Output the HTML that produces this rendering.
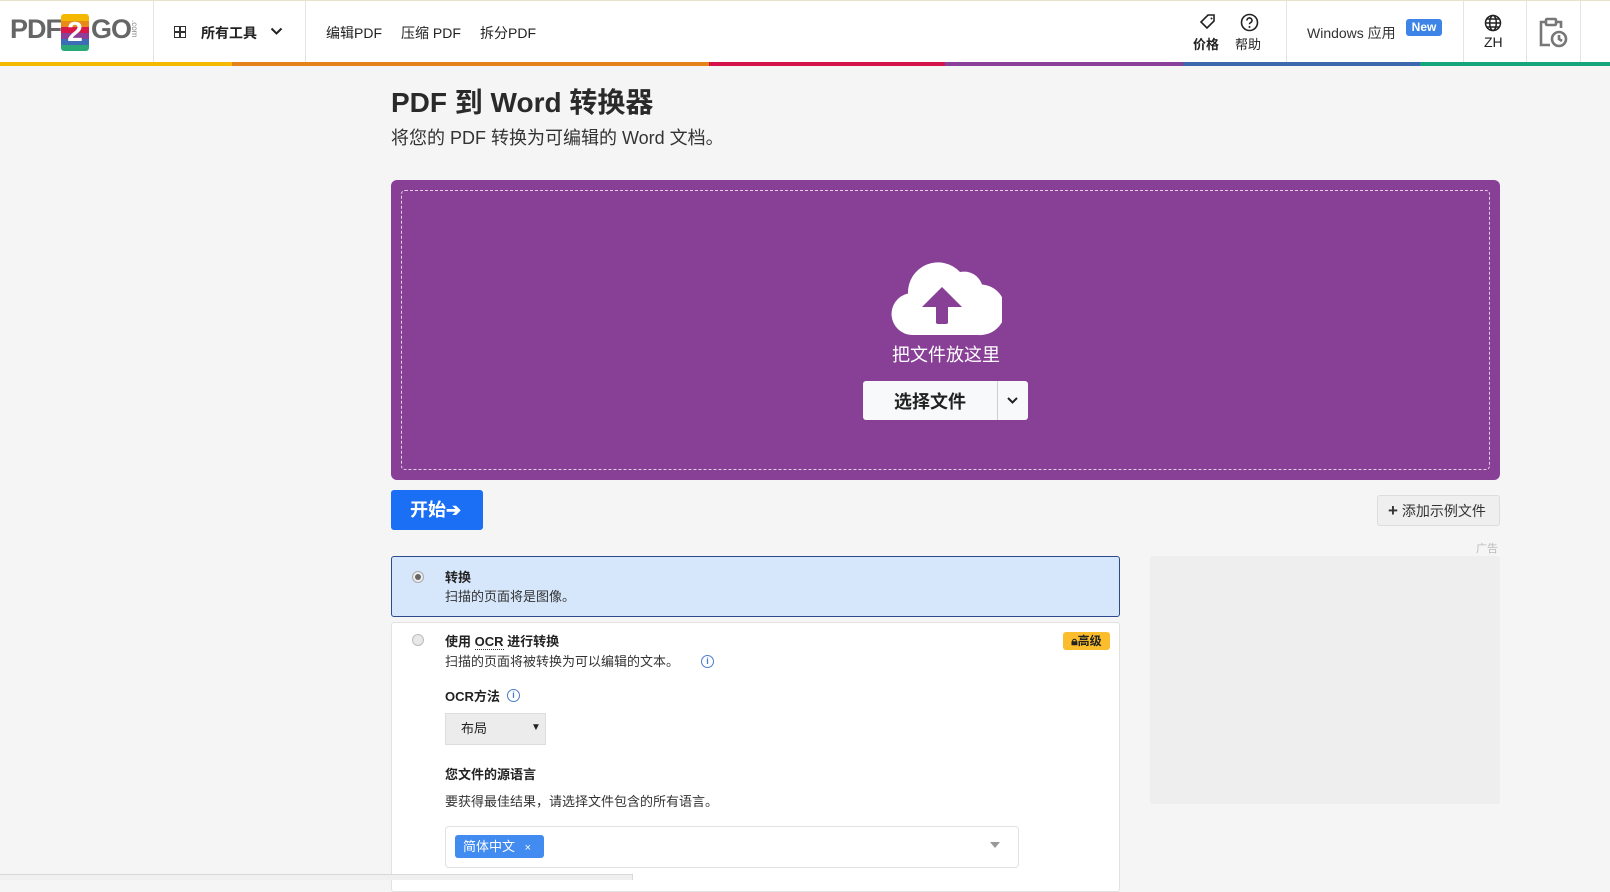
<!DOCTYPE html>
<html><head><meta charset="utf-8">
<style>
*{margin:0;padding:0;box-sizing:border-box}
body{width:1610px;height:880px;overflow:hidden;background:#f5f5f5;font-family:"Liberation Sans","Noto Sans CJK SC",sans-serif;color:#222;position:relative}
.abs{position:absolute}
.hdr{position:absolute;left:0;top:0;width:1610px;height:62px;background:#fff;border-top:1px solid #e8e4c8}
.sep{position:absolute;top:0;width:1px;height:62px;background:#e4e4e4}
.bar{position:absolute;top:62px;height:4px}
.nav{position:absolute;top:22px;font-size:14px;color:#222}
</style></head><body>
<div class="hdr">
  <div class="abs" style="left:10px;top:13px;font-size:27px;font-weight:bold;color:#666;letter-spacing:-1px">PDF</div>
  <div class="abs" style="left:61px;top:13px;width:28px;height:37px;border-radius:3px;overflow:hidden">
    <div style="height:7px;background:#f5b800"></div><div style="height:6px;background:#e88a1a"></div><div style="height:6px;background:#d9184a"></div><div style="height:6px;background:#8b3f98"></div><div style="height:6px;background:#3b6cb5"></div><div style="height:6px;background:#2aa876"></div>
    <div class="abs" style="left:0;top:2px;width:28px;text-align:center;color:#fff;font-weight:bold;font-size:28px">2</div>
  </div>
  <div class="abs" style="left:91px;top:13px;font-size:27px;font-weight:bold;color:#666;letter-spacing:-1px">GO</div>
  <div class="abs" style="left:139px;top:19px;font-size:8px;color:#888;transform:rotate(90deg);transform-origin:left top;white-space:nowrap">.com</div>
  <div class="sep" style="left:153px"></div>
  <div class="abs" style="left:174px;top:25px;width:12px;height:12px;border:1.5px solid #333"></div>
  <div class="abs" style="left:179px;top:25px;width:1.5px;height:12px;background:#333"></div>
  <div class="abs" style="left:174px;top:30px;width:12px;height:1.5px;background:#333"></div>
  <div class="nav" style="left:201px;font-weight:bold">所有工具</div>
  <svg class="abs" style="left:270px;top:26px" width="13" height="9" viewBox="0 0 13 9"><path d="M1.5 1.5 6.5 6.5 11.5 1.5" fill="none" stroke="#222" stroke-width="2"/></svg>
  <div class="sep" style="left:305px"></div>
  <div class="nav" style="left:326px">编辑PDF</div>
  <div class="nav" style="left:401px">压缩 PDF</div>
  <div class="nav" style="left:480px">拆分PDF</div>
  <svg class="abs" style="left:1199px;top:12px" width="18" height="18" viewBox="0 0 18 18"><path d="M9 2h6v6l-7 7-6-6z" fill="none" stroke="#222" stroke-width="1.6"/><circle cx="12.5" cy="5.5" r="1" fill="#222"/></svg>
  <div class="abs" style="left:1193px;top:33px;font-size:13px;font-weight:bold">价格</div>
  <svg class="abs" style="left:1240px;top:12px" width="19" height="19" viewBox="0 0 19 19"><circle cx="9.5" cy="9.5" r="8" fill="none" stroke="#222" stroke-width="1.6"/><path d="M7 7.5a2.5 2.5 0 1 1 3.3 2.3c-.6.3-.8.7-.8 1.4" fill="none" stroke="#222" stroke-width="1.6"/><circle cx="9.5" cy="14" r="1" fill="#222"/></svg>
  <div class="abs" style="left:1235px;top:33px;font-size:13px">帮助</div>
  <div class="sep" style="left:1286px"></div>
  <div class="abs" style="left:1307px;top:22px;font-size:14px;color:#333">Windows 应用</div>
  <div class="abs" style="left:1406px;top:18px;width:36px;height:17px;background:#3d84e6;border-radius:3px;color:#fff;font-size:12px;font-weight:bold;text-align:center;line-height:16px">New</div>
  <div class="sep" style="left:1463px"></div>
  <svg class="abs" style="left:1484px;top:13px" width="18" height="18" viewBox="0 0 18 18" fill="none" stroke="#222" stroke-width="1.5"><circle cx="9" cy="9" r="7.5"/><ellipse cx="9" cy="9" rx="3.3" ry="7.5"/><path d="M1.5 9h15M3 5h12M3 13h12"/></svg>
  <div class="abs" style="left:1484px;top:33px;font-size:14px">ZH</div>
  <div class="sep" style="left:1526px"></div>
  <svg class="abs" style="left:1538px;top:16px" width="30" height="32" viewBox="0 0 30 32" fill="none" stroke="#777" stroke-width="2.6"><path d="M8 5H3v23h9"/><path d="M18 5h5v6"/><rect x="8" y="2" width="10" height="6" rx="1"/><circle cx="21" cy="22" r="7"/><path d="M21 18v4l3 2"/></svg>
  <div class="sep" style="left:1580px"></div>
</div>
<div class="bar" style="left:0;width:232px;background:#f5b800"></div>
<div class="bar" style="left:232px;width:477px;background:#e5821b"></div>
<div class="bar" style="left:709px;width:236px;background:#d5124a"></div>
<div class="bar" style="left:945px;width:238px;background:#8a3f98"></div>
<div class="bar" style="left:1183px;width:237px;background:#3c69ad"></div>
<div class="bar" style="left:1420px;width:190px;background:#14a57d"></div>

<div class="abs" style="left:391px;top:81px;font-size:28px;font-weight:bold;color:#2a2a2a">PDF 到 Word 转换器</div>
<div class="abs" style="left:391px;top:124px;font-size:18px;color:#333">将您的 PDF 转换为可编辑的 Word 文档。</div>

<div class="abs" style="left:391px;top:180px;width:1109px;height:300px;background:#883f96;border-radius:6px"></div>
<div class="abs" style="left:401px;top:190px;width:1089px;height:280px;border:1px dashed #e6cfe9;border-radius:4px"></div>
<svg class="abs" style="left:890px;top:256px" width="112" height="80" viewBox="0 0 112 80"><path d="M22 79a21 21 0 0 1-4-41.5A30 30 0 0 1 70 16a19 19 0 0 1 22 12.5A24.5 24.5 0 0 1 88 79z" fill="#fff"/><path d="M52 31 32 51h14v16h12V51h14z" fill="#883f96"/><rect x="46" y="50" width="12" height="18" rx="2" fill="#883f96"/></svg>
<div class="abs" style="left:891px;top:341px;font-size:18px;color:#fff;width:110px;text-align:center">把文件放这里</div>
<div class="abs" style="left:863px;top:381px;width:165px;height:39px;background:#f7f9fa;border-radius:3px"></div>
<div class="abs" style="left:997px;top:381px;width:1px;height:39px;background:#cfcfcf"></div>
<div class="abs" style="left:863px;top:388px;width:134px;text-align:center;font-size:18px;font-weight:bold;color:#222">选择文件</div>
<svg class="abs" style="left:1006px;top:396px" width="13" height="9" viewBox="0 0 13 9"><path d="M2 2 6.5 6.5 11 2" fill="none" stroke="#222" stroke-width="2"/></svg>

<div class="abs" style="left:391px;top:490px;width:92px;height:40px;background:#1a6ff5;border-radius:3px;color:#fff;font-size:18px;font-weight:bold;line-height:40px;padding-left:19px">开始➔</div>
<div class="abs" style="left:1377px;top:495px;width:123px;height:31px;background:#efefef;border:1px solid #ddd;border-radius:3px;font-size:14px;color:#333;line-height:29px;padding-left:10px"><b style="font-size:17px">+</b> 添加示例文件</div>

<div class="abs" style="left:1476px;top:540px;font-size:11px;color:#bbb">广告</div>
<div class="abs" style="left:1150px;top:556px;width:350px;height:248px;background:#eeeeee;border-radius:3px"></div>

<div class="abs" style="left:391px;top:556px;width:729px;height:61px;background:#d6e6fb;border:1px solid #2d4b8c;border-radius:3px"></div>
<div class="abs" style="left:412px;top:571px;width:12px;height:12px;border-radius:50%;background:#eee;border:1px solid #aaa"></div>
<div class="abs" style="left:415px;top:574px;width:6px;height:6px;border-radius:50%;background:#666"></div>
<div class="abs" style="left:445px;top:567px;font-size:13px;font-weight:bold">转换</div>
<div class="abs" style="left:445px;top:586px;font-size:13px;color:#333">扫描的页面将是图像。</div>

<div class="abs" style="left:391px;top:622px;width:729px;height:270px;background:#fff;border:1px solid #e2e2e2;border-radius:3px"></div>
<div class="abs" style="left:412px;top:634px;width:12px;height:12px;border-radius:50%;background:#e8e8e8;border:1px solid #bbb"></div>
<div class="abs" style="left:445px;top:631px;font-size:13px;font-weight:bold">使用 <span style="border-bottom:1px dotted #333">OCR</span> 进行转换</div>
<div class="abs" style="left:1063px;top:632px;width:47px;height:18px;background:#fbbd2b;border-radius:3px;font-size:12px;font-weight:bold;line-height:18px;text-align:center">🔒︎高级</div>
<div class="abs" style="left:445px;top:651px;font-size:13px;color:#333">扫描的页面将被转换为可以编辑的文本。</div>
<div class="abs" style="left:701px;top:655px;width:13px;height:13px;border:1.3px solid #4a7bd0;border-radius:50%;color:#4a7bd0;font-size:9px;font-weight:bold;text-align:center;line-height:11px">i</div>
<div class="abs" style="left:445px;top:686px;font-size:13px;font-weight:bold">OCR方法</div>
<div class="abs" style="left:507px;top:689px;width:13px;height:13px;border:1.3px solid #4a7bd0;border-radius:50%;color:#4a7bd0;font-size:9px;font-weight:bold;text-align:center;line-height:11px">i</div>
<div class="abs" style="left:445px;top:713px;width:101px;height:32px;background:#ececec;border:1px solid #ddd;font-size:13px;line-height:30px;padding-left:15px">布局<span style="position:absolute;left:85px;top:-1px;font-size:10px">▼</span></div>
<div class="abs" style="left:445px;top:764px;font-size:13px;font-weight:bold">您文件的源语言</div>
<div class="abs" style="left:445px;top:791px;font-size:13px;color:#333">要获得最佳结果，请选择文件包含的所有语言。</div>
<div class="abs" style="left:445px;top:826px;width:574px;height:42px;border:1px solid #e2e2e2;border-radius:4px;background:#fff"></div>
<div class="abs" style="left:455px;top:835px;width:89px;height:23px;background:#428bf0;border-radius:3px;color:#fff;font-size:13px;line-height:23px;padding-left:8px">简体中文 <span style="font-size:11px;margin-left:6px">×</span></div>
<div class="abs" style="left:990px;top:842px;width:0;height:0;border-left:5px solid transparent;border-right:5px solid transparent;border-top:6px solid #999"></div>
<div class="abs" style="left:0;top:874px;width:633px;height:6px;background:#f0f0f0;border-top:1px solid #d8d8d8;border-right:1px solid #d8d8d8"></div>
</body></html>
